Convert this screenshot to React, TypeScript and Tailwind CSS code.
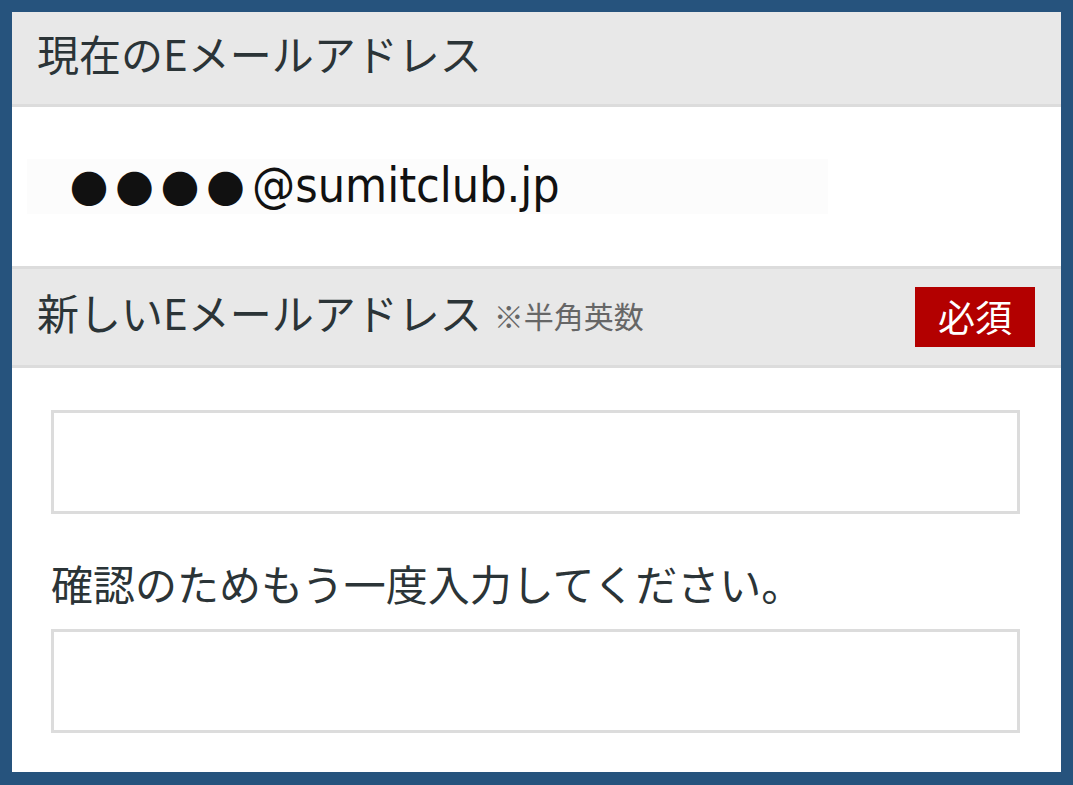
import React from 'react';

const jp = '"Noto Sans CJK JP", "Noto Sans", sans-serif';

function SectionHeader({ children, className = '' }: { children: React.ReactNode; className?: string }) {
  return (
    <div
      className={`flex items-center bg-[#e8e8e8] border-[#dcdcdc] pl-[25px] pr-[26px] text-[#2b3437] ${className}`}
    >
      {children}
    </div>
  );
}

function TextBox() {
  return <input type="text" className="block w-full h-[104px] border-[3px] border-[#dcdcdc] bg-white outline-none" />;
}

export default function App() {
  return (
    <div className="min-h-[785px] bg-[#26537d] pt-[12px] pl-[12px] pr-[12px] pb-[13px]" style={{ fontFamily: jp }}>
      <div className="bg-white">
        {/* current address */}
        <SectionHeader className="h-[95px] border-b-[3px]">
          <span className="text-[42px] leading-[42px] -mt-[10px]">現在のEメールアドレス</span>
        </SectionHeader>
        <div className="h-[159px] flex items-center pl-[15px]">
          <div className="w-[801px] h-[55px] bg-[#fcfcfc] flex items-center pl-[43px] text-[#111111]">
            <span className="text-[38px] leading-[38px] tracking-[7.5px]">●●●●</span>
            <span
              className="text-[48px] leading-[48px] -mt-[4px]"
              style={{ fontFamily: '"DejaVu Sans Condensed", "DejaVu Sans", sans-serif', fontStretch: 'condensed' }}
            >
              @sumitclub.jp
            </span>
          </div>
        </div>

        {/* new address */}
        <SectionHeader className="h-[102px] border-y-[3px]">
          <span className="text-[42px] leading-[42px] -mt-[10px]">新しいEメールアドレス</span>
          <span className="ml-[12px] text-[30px] leading-[30px] text-[#666666] -mt-[4px]">※半角英数</span>
          <span className="ml-auto w-[120px] h-[60px] bg-[#b30000] text-white text-[37px] flex items-center justify-center">
            必須
          </span>
        </SectionHeader>
        <div className="pl-[39px] pr-[41px] pt-[42px] pb-[39px]">
          <TextBox />
          <p className="mt-[48px] mb-[25px] text-[42px] leading-[42px] text-[#2b3437]">確認のためもう一度入力してください。</p>
          <TextBox />
        </div>
      </div>
    </div>
  );
}
